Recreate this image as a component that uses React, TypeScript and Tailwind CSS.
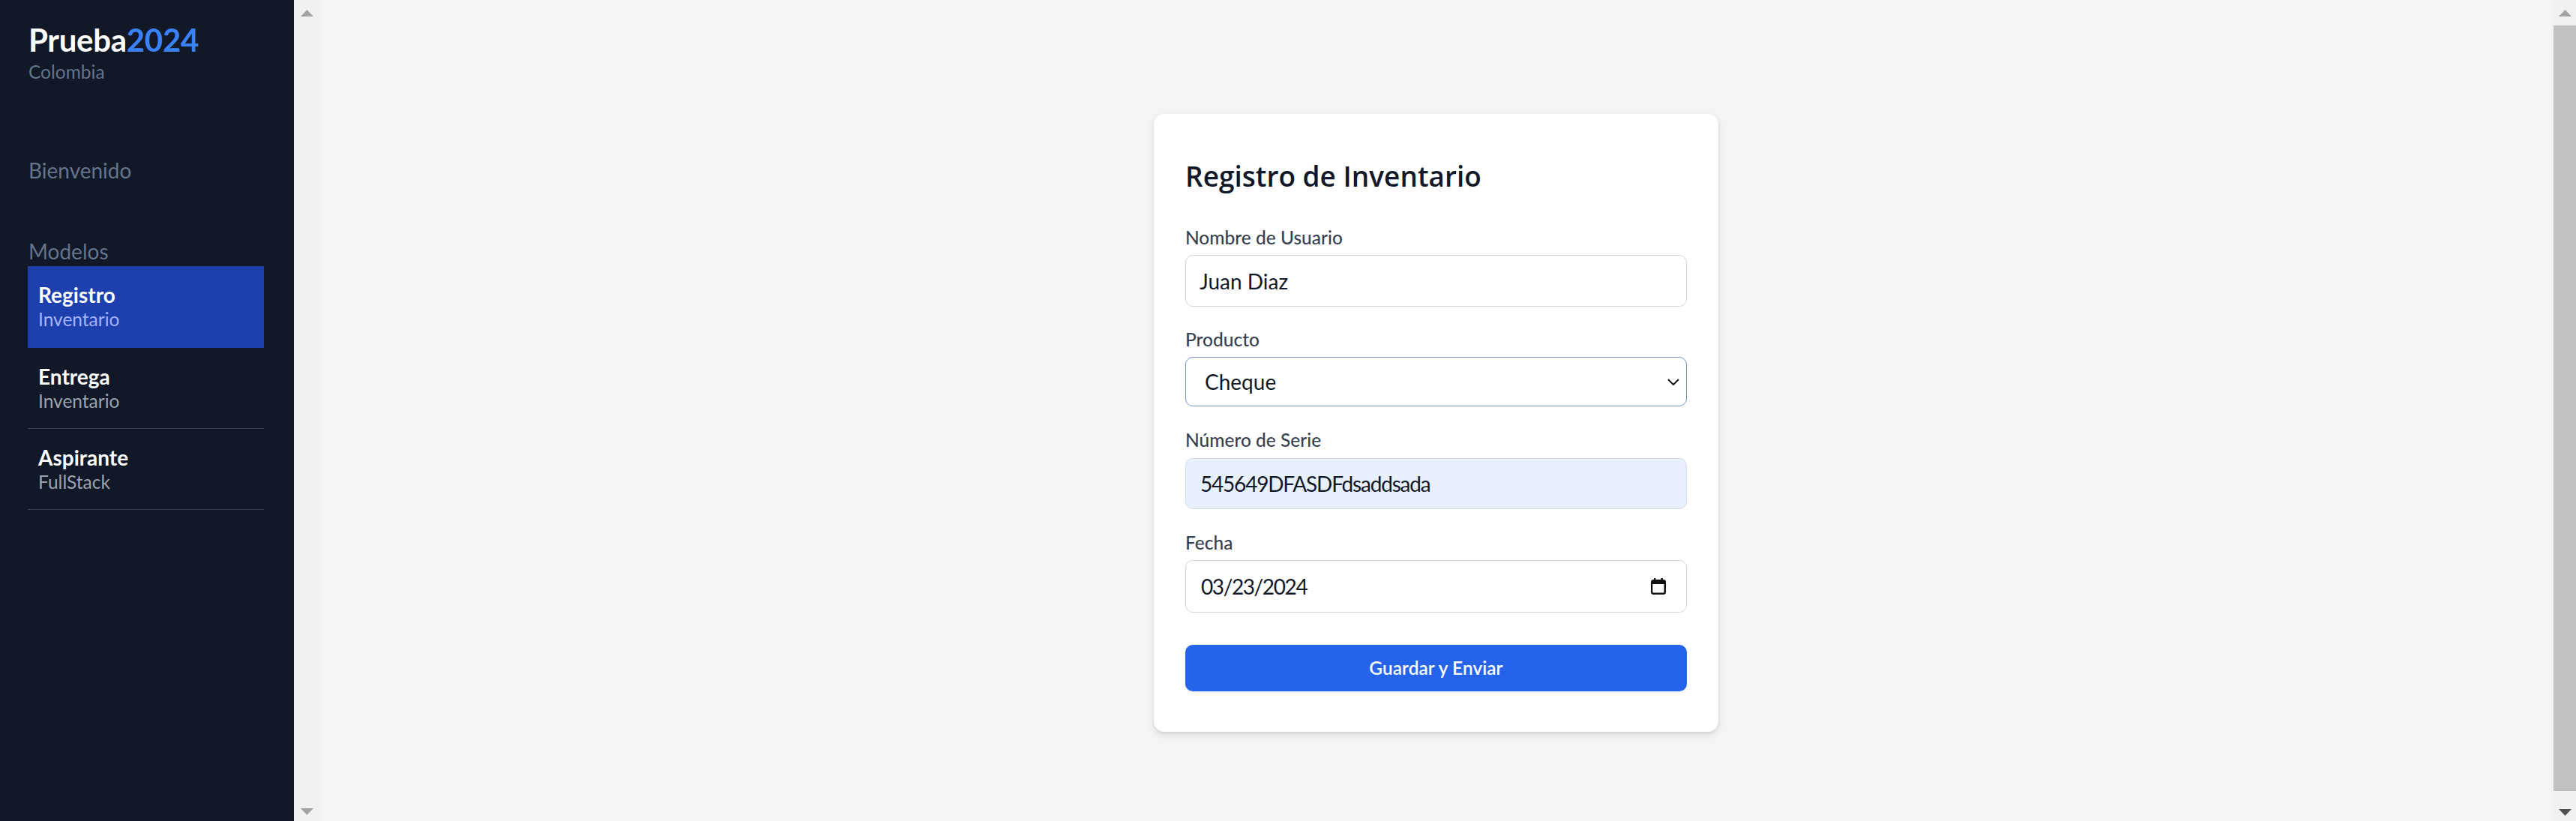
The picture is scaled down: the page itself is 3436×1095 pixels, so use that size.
const font = { fontFamily: "Lato, 'Noto Sans', sans-serif" }

function UpArrow({ color }: { color: string }) {
  return (
    <svg width="17" height="9" viewBox="0 0 17 9">
      <polygon points="8.5,0 17,9 0,9" fill={color} />
    </svg>
  )
}

function DownArrow({ color }: { color: string }) {
  return (
    <svg width="17" height="9" viewBox="0 0 17 9">
      <polygon points="0,0 17,0 8.5,9" fill={color} />
    </svg>
  )
}

const navItems = [
  { title: "Registro", sub: "Inventario", active: true },
  { title: "Entrega", sub: "Inventario", active: false },
  { title: "Aspirante", sub: "FullStack", active: false },
]

function Sidebar() {
  return (
    <aside className="w-[392px] h-[1095px] shrink-0 bg-[#111827] pl-[37px] pr-[40px]">
      <div className="pt-[29px] px-[1px]">
        <div className="text-[42px] leading-[49px] font-bold tracking-[-0.3px]">
          <span className="text-white">Prueba</span>
          <span className="text-[#3b82f6]">2024</span>
        </div>
        <div className="text-[24.5px] leading-[35px] text-[#64748b]">Colombia</div>
      </div>

      <div className="mt-[93px] px-[1px] text-[28px] leading-[42px] text-[#64748b]">Bienvenido</div>

      <div className="mt-[67px] px-[1px] text-[28px] leading-[40px] text-[#64748b]">Modelos</div>

      <nav>
        {navItems.map((item) => (
          <div
            key={item.title}
            className={
              item.active
                ? "bg-[#1e40af] px-[14px] pt-[19px] pb-[23px] border-b border-[#1e40af]"
                : "px-[14px] pt-[19px] pb-[22px] border-b border-[#374151]"
            }
          >
            <div className="text-[28px] leading-[38px] font-bold text-white">{item.title}</div>
            <div
              className={
                item.active
                  ? "text-[24.5px] leading-[28px] text-[#a5b4fc]"
                  : "text-[24.5px] leading-[28px] text-[#9ca3af]"
              }
            >
              {item.sub}
            </div>
          </div>
        ))}
      </nav>
    </aside>
  )
}

function Label({ children }: { children: React.ReactNode }) {
  return <label className="block text-[24.5px] leading-[35px] font-medium text-[#374151]">{children}</label>
}

function InventoryForm() {
  return (
    <div className="w-[753px] h-fit bg-white rounded-[14px] shadow-[0_4px_10px_rgba(0,0,0,0.10),0_2px_4px_rgba(0,0,0,0.06)] px-[42px] pt-[58px] pb-[54px]">
      <h1
        className="text-[37px] leading-[49px] font-semibold text-[#111827]"
        style={{ fontFamily: "'Open Sans', 'Noto Sans', sans-serif" }}
      >
        Registro de Inventario
      </h1>

      <form className="mt-[40px]" onSubmit={(e) => e.preventDefault()}>
        <div className="mb-[26px]">
          <Label>Nombre de Usuario</Label>
          <input
            type="text"
            defaultValue="Juan Diaz"
            className="mt-[6px] block w-full h-[69px] px-[18px] rounded-[10px] border border-[#d1d5db] bg-white text-[28px] text-[#111827] outline-none"
            style={font}
          />
        </div>

        <div className="mb-[27px]">
          <Label>Producto</Label>
          <div className="relative mt-[6px]">
            <select
              defaultValue="Cheque"
              className="block w-full h-[66px] pl-[25px] pr-[50px] rounded-[10px] border border-[#7198d2] bg-white text-[28px] text-[#111827] appearance-none outline-none"
              style={font}
            >
              <option>Cheque</option>
              <option>Efectivo</option>
              <option>Tarjeta</option>
            </select>
            <svg
              className="absolute right-[10px] top-[29px] pointer-events-none"
              width="16"
              height="9"
              viewBox="0 0 16 9"
            >
              <polyline points="1,1 8,8 15,1" fill="none" stroke="#111111" strokeWidth="2" />
            </svg>
          </div>
        </div>

        <div className="mb-[27px]">
          <Label>Número de Serie</Label>
          <input
            type="text"
            defaultValue="545649DFASDFdsaddsada"
            className="mt-[7px] block w-full h-[68px] px-[19px] rounded-[10px] border border-[#d5dbe3] bg-[#e8f0fe] text-[28px] tracking-[-1.2px] text-[#111827] outline-none"
            style={font}
          />
        </div>

        <div>
          <Label>Fecha</Label>
          <div className="relative mt-[6px]">
            <input
              type="text"
              defaultValue="03/23/2024"
              className="block w-full h-[70px] pl-[20px] pr-[60px] rounded-[10px] border border-[#d1d5db] bg-white text-[28px] tracking-[-1.4px] text-[#111827] outline-none"
              style={font}
            />
            <svg
              className="absolute right-[28px] top-[24px] pointer-events-none"
              width="20"
              height="22"
              viewBox="0 0 20 22"
            >
              <rect x="1.2" y="3.2" width="17.6" height="17.6" rx="2" fill="none" stroke="#111111" strokeWidth="2.4" />
              <rect x="1" y="3" width="18" height="5" fill="#111111" />
              <rect x="4" y="0" width="2.4" height="4" fill="#111111" />
              <rect x="13.6" y="0" width="2.4" height="4" fill="#111111" />
            </svg>
          </div>
        </div>

        <button
          type="submit"
          className="mt-[43px] block w-full h-[62px] rounded-[10px] bg-[#2563eb] text-white text-[24.5px] font-semibold shadow-sm"
          style={font}
        >
          Guardar y Enviar
        </button>
      </form>
    </div>
  )
}

export default function App() {
  return (
    <div className="flex w-[3436px] h-[1095px] overflow-hidden" style={font}>
      <Sidebar />

      <div className="w-[35px] shrink-0 h-[1095px] bg-[#f1f1f1] flex flex-col items-center justify-between pt-[13px] pb-[8px]">
        <UpArrow color="#a3a3a3" />
        <DownArrow color="#a3a3a3" />
      </div>

      <main className="flex-1 h-[1095px] bg-[#f3f4f6] flex justify-center pt-[152px]">
        <InventoryForm />
      </main>

      <div className="w-[32px] shrink-0 h-[1095px] bg-[#f1f1f1] flex flex-col">
        <div className="h-[34px] flex items-start pt-[13px] pl-[9px]">
          <UpArrow color="#a3a3a3" />
        </div>
        <div className="ml-[2px] w-[30px] h-[1021px] bg-[#c1c1c1]" />
        <div className="flex-1 flex items-start pt-[24px] pl-[9px]">
          <DownArrow color="#505050" />
        </div>
      </div>
    </div>
  )
}
